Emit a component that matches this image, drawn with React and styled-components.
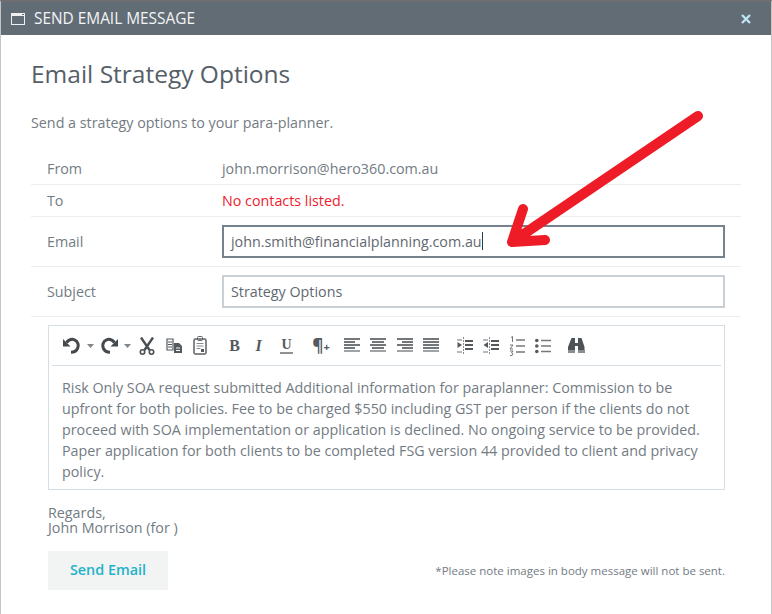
import React from 'react'
import styled, { createGlobalStyle } from 'styled-components'

const GlobalStyle = createGlobalStyle`
  html, body { margin: 0; padding: 0; background: #fff; }
  body { font-family: "Open Sans", "Liberation Sans", sans-serif; color: #737b83; }
`

const Modal = styled.div`
  position: relative;
  width: 772px;
  height: 614px;
  box-sizing: border-box;
  border-top: 2px solid #6e6e73;
  border-left: 1px solid #c4c4c4;
  border-right: 1px solid #c4c4c4;
  overflow: hidden;
  background: #fff;
`

const TitleBar = styled.div`
  height: 33px;
  background: #626c75;
  display: flex;
  align-items: center;
  padding: 0 20px 0 10px;
  color: #f2f4f5;
  font-size: 15.4px;
`

const TitleText = styled.span`
  margin-left: 9px;
  flex: 1;
`

const CloseIcon = styled.svg`
  width: 10px;
  height: 10px;
`

const Body = styled.div`
  padding: 21px 30px 0;
`

const Heading = styled.h1`
  margin: 0;
  font-size: 24.5px;
  font-weight: 400;
  line-height: 36px;
  color: #565e67;
`

const Intro = styled.p`
  margin: 20px 0 20px;
  font-size: 14.3px;
  line-height: 21px;
  color: #737b83;
`

const Row = styled.div`
  display: flex;
  align-items: center;
  box-sizing: border-box;
  height: ${p => p.$h}px;
  padding-left: 16px;
  border-bottom: 1px solid #e9eef1;
  font-size: 14.3px;
`

const Label = styled.div`
  width: 175px;
  color: #737b83;
`

const Value = styled.div`
  color: ${p => (p.$error ? '#ed1c2e' : '#737b83')};
`

const Field = styled.div`
  width: 503px;
  height: 33px;
  box-sizing: border-box;
  padding: 0 0 1px 7px;
  display: flex;
  align-items: center;
  border: 2px solid ${p => (p.$focus ? '#76828c' : '#c8d0d6')};
  font-size: 14.3px;
  color: #5f6870;
`

const Caret = styled.span`
  display: inline-block;
  width: 1px;
  height: 18px;
  background: #2e3a44;
`

const Editor = styled.div`
  margin: 8px 0 0 17px;
  width: 677px;
  box-sizing: border-box;
  border: 1px solid #d5dfe3;
`

const Toolbar = styled.div`
  height: 40px;
  box-sizing: border-box;
  margin: 0 3px;
  padding-left: 10px;
  display: flex;
  align-items: center;
  border-bottom: 1px solid #d5dfe3;
`

const Tool = styled.div`
  flex: none;
  width: ${p => p.$w}px;
  margin-left: ${p => p.$gap || 0}px;
  display: flex;
  align-items: center;
  justify-content: center;
  color: ${p => p.$color || '#555a5e'};
  font-family: ${p => (p.$serif ? '"Liberation Serif", serif' : 'inherit')};
  font-weight: ${p => (p.$bold ? 700 : 400)};
  font-style: ${p => (p.$italic ? 'italic' : 'normal')};
  font-size: ${p => p.$size || 16}px;
  line-height: 18px;
`

const Underlined = styled.span`
  border-bottom: 2px solid #8d9296;
  line-height: 14px;
  padding: 0 1px;
`

const Plus = styled.span`
  font-size: 11px;
  font-weight: 700;
  margin-top: 3px;
`

const Message = styled.div`
  padding: 11px 13px 7px;
  font-size: 14.3px;
  line-height: 21px;
  color: #737b83;
`

const Regards = styled.div`
  margin: 15px 0 0 17px;
  font-size: 14.3px;
  line-height: 15px;
  color: #737b83;
`

const Footer = styled.div`
  margin: 16px 0 0 17px;
  width: 677px;
  display: flex;
  align-items: center;
  justify-content: space-between;
`

const SendButton = styled.button`
  width: 120px;
  height: 39px;
  border: 0;
  padding: 0 0 2px;
  background: #f2f4f4;
  color: #1fb2c9;
  font-family: inherit;
  font-size: 14.4px;
  font-weight: 600;
`

const Note = styled.span`
  font-size: 11.5px;
  color: #737b83;
`

const ArrowLayer = styled.svg`
  position: absolute;
  left: -1px;
  top: -2px;
  width: 772px;
  height: 614px;
  pointer-events: none;
`

const WindowIcon = () => (
  <svg width="14" height="12" viewBox="0 0 14 12" fill="none">
    <rect x="0.5" y="0.5" width="13" height="11" stroke="#eef0f2" />
    <rect x="0" y="0" width="14" height="3" fill="#eef0f2" />
    <rect x="11" y="1" width="2" height="1" fill="#626c75" />
  </svg>
)

const Ic = ({ w = 16, h = 18, children }) => (
  <svg width={w} height={h} viewBox={`0 0 ${w} ${h}`} fill="none">{children}</svg>
)

const Drop = () => <Ic w={7} h={4}><path d="M0 0h7L3.5 4z" fill="#80868b" /></Ic>

const Undo = () => (
  <Ic w={19} h={18}>
    <path d="M4.500 5.500C7 2.500 10 1.800 12.500 2.800c3.500 1.400 4.500 5.500 3 8.700-1 2.200-3.400 3.700-6.500 3.700" stroke="#44494d" strokeWidth="3" />
    <path d="M1 2v7.500h7.500z" fill="#44494d" />
  </Ic>
)

const Redo = () => (
  <Ic w={19} h={18}>
    <path d="M14.500 5.500C12 2.500 9 1.800 6.500 2.800c-3.500 1.400-4.500 5.500-3 8.700 1 2.200 3.400 3.700 6.500 3.700" stroke="#44494d" strokeWidth="3" />
    <path d="M18 2v7.500h-7.500z" fill="#44494d" />
  </Ic>
)

const Scissors = () => (
  <Ic w={16} h={18}>
    <path d="M2 0.500l8.500 12.500M14 0.500 5.500 13" stroke="#4a5054" strokeWidth="2.400" />
    <circle cx="3.500" cy="15" r="2.200" stroke="#4a5054" strokeWidth="1.600" />
    <circle cx="12.500" cy="15" r="2.200" stroke="#4a5054" strokeWidth="1.600" />
  </Ic>
)

const Copy = () => (
  <Ic w={18} h={16}>
    <path d="M1 1h6v11H1z" stroke="#555a5e" strokeWidth="1.200" />
    <path d="M2 4h4M2 6.500h4M2 9h4" stroke="#555a5e" />
    <path d="M8 5h5l3 3v7H8z" fill="#555a5e" />
    <path d="M10 10h4M10 12.500h4" stroke="#fff" />
  </Ic>
)

const Paste = () => (
  <Ic w={14} h={19}>
    <rect x="1" y="3" width="12" height="15" rx="1.500" stroke="#5d6266" strokeWidth="1.500" />
    <rect x="4.500" y="0.500" width="5" height="4" rx="1" stroke="#5d6266" />
    <path d="M3.500 7.500h7M3.500 10h7M3.500 12.500h4" stroke="#888" />
    <path d="M8 13h3v3H8z" fill="#555a5e" />
  </Ic>
)

const lineSets = {
  left: [[0, 16], [0, 11], [0, 16], [0, 11], [0, 16]],
  center: [[0, 16], [2, 12], [0, 16], [2, 12], [0, 16]],
  right: [[0, 16], [5, 11], [0, 16], [5, 11], [0, 16]],
  justify: [[0, 16], [0, 16], [0, 16], [0, 16], [0, 16]],
}

const Align = ({ type }) => (
  <Ic w={16} h={15}>
    {lineSets[type].map(([x, len], i) => (
      <rect key={i} x={x} y={i * 3} width={len} height="2" fill={i === 4 ? '#a0a3a6' : '#74777a'} />
    ))}
  </Ic>
)

const Indent = ({ flip }) => (
  <Ic w={16} h={18}>
    <path d="M6.500 0v18" stroke="#8a8d90" strokeDasharray="2 1" />
    <path d="M0 3h5M0 15h5" stroke="#a0a3a6" strokeWidth="1.500" />
    <path d="M8 4h8M8 8h8M8 12h8" stroke="#55595d" strokeWidth="1.800" />
    <path d={flip ? 'M5 5v6L0.500 8z' : 'M0.500 5v6L5 8z'} fill="#555a5e" />
  </Ic>
)

const NumList = () => (
  <Ic w={16} h={20}>
    <path d="M2 1.500 3.500 0.500V6M1 9h3L1 13h3M1 15h3L2.500 17 4 18l-1 1.500H1" stroke="#666" strokeWidth="0.900" />
    <path d="M7 4h9M7 10h9M7 16h9" stroke="#777" strokeWidth="1.400" />
  </Ic>
)

const BulList = () => (
  <Ic w={16} h={16}>
    <circle cx="1.800" cy="2.500" r="1.800" fill="#555a5e" />
    <circle cx="1.800" cy="8" r="1.800" fill="#555a5e" />
    <circle cx="1.800" cy="13.500" r="1.800" fill="#555a5e" />
    <path d="M6 2.500h10M6 8h10M6 13.500h10" stroke="#777" strokeWidth="1.400" />
  </Ic>
)

const Binoculars = () => (
  <Ic w={17} h={15}>
    <path d="M3.500 0h3.500v5h3V0h3.500l3 9v3H10V8H7v4H0V9z" fill="#4c5256" />
    <path d="M0 12h7v3H0zM10 12h7v3h-7z" fill="#8b8f92" />
  </Ic>
)

const App = () => (
  <>
    <GlobalStyle />
    <Modal>
      <TitleBar>
        <WindowIcon />
        <TitleText>SEND EMAIL MESSAGE</TitleText>
        <CloseIcon viewBox="0 0 10 10">
          <path d="M1 1l8 8M9 1l-8 8" stroke="#bfe3f5" strokeWidth="2.400" />
        </CloseIcon>
      </TitleBar>
      <Body>
        <Heading>Email Strategy Options</Heading>
        <Intro>Send a strategy options to your para-planner.</Intro>
        <Row $h={32}><Label>From</Label><Value>john.morrison@hero360.com.au</Value></Row>
        <Row $h={32}><Label>To</Label><Value $error>No contacts listed.</Value></Row>
        <Row $h={50}>
          <Label>Email</Label>
          <Field $focus>john.smith@financialplanning.com.au<Caret /></Field>
        </Row>
        <Row $h={50}>
          <Label>Subject</Label>
          <Field>Strategy Options</Field>
        </Row>
        <Editor>
          <Toolbar>
            <Tool $w={19}><Undo /></Tool>
            <Tool $w={7} $gap={6}><Drop /></Tool>
            <Tool $w={19} $gap={6}><Redo /></Tool>
            <Tool $w={7} $gap={5}><Drop /></Tool>
            <Tool $w={16} $gap={8}><Scissors /></Tool>
            <Tool $w={18} $gap={11}><Copy /></Tool>
            <Tool $w={14} $gap={9}><Paste /></Tool>
            <Tool $w={11} $gap={22} $serif $bold>B</Tool>
            <Tool $w={9} $gap={14} $serif $italic $bold>I</Tool>
            <Tool $w={11} $gap={18} $serif $bold $size={14}><Underlined>U</Underlined></Tool>
            <Tool $w={18} $gap={20} $bold $size={17}>¶<Plus>+</Plus></Tool>
            <Tool $w={16} $gap={14}><Align type="left" /></Tool>
            <Tool $w={16} $gap={10}><Align type="center" /></Tool>
            <Tool $w={16} $gap={11}><Align type="right" /></Tool>
            <Tool $w={16} $gap={10}><Align type="justify" /></Tool>
            <Tool $w={16} $gap={18}><Indent /></Tool>
            <Tool $w={16} $gap={10}><Indent flip /></Tool>
            <Tool $w={16} $gap={10}><NumList /></Tool>
            <Tool $w={16} $gap={10}><BulList /></Tool>
            <Tool $w={17} $gap={17}><Binoculars /></Tool>
          </Toolbar>
          <Message>
            Risk Only SOA request submitted Additional information for paraplanner: Commission to be upfront for both policies. Fee to be charged $550 including GST per person if the clients do not proceed with SOA implementation or application is declined. No ongoing service to be provided. Paper application for both clients to be completed FSG version 44 provided to client and privacy policy.
          </Message>
        </Editor>
        <Regards>Regards,<br />John Morrison (for )</Regards>
        <Footer>
          <SendButton>Send Email</SendButton>
          <Note>*Please note images in body message will not be sent.</Note>
        </Footer>
      </Body>
      <ArrowLayer viewBox="0 0 772 614">
        <path d="M698 116 512 242M523 209 512 242 545 240" stroke="#ed1c26" strokeWidth="10" strokeLinecap="round" strokeLinejoin="round" fill="none" />
      </ArrowLayer>
    </Modal>
  </>
)

export default App
